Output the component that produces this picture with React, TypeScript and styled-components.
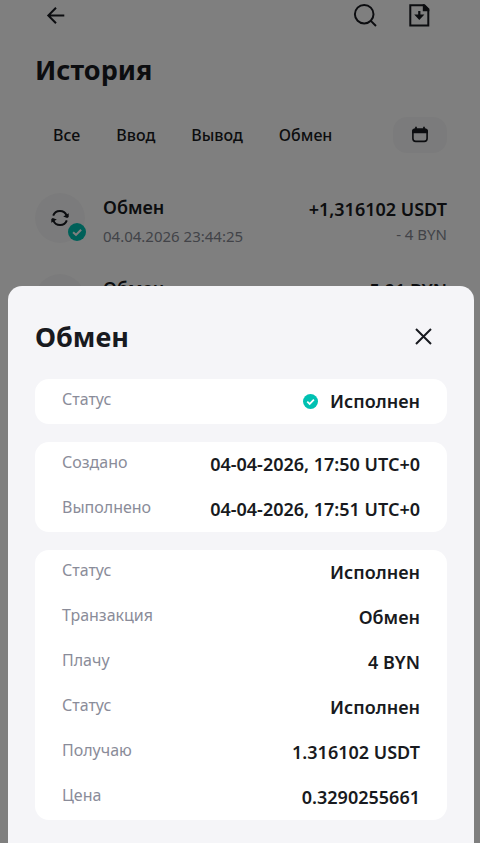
import React from "react";
import styled, { createGlobalStyle } from "styled-components";

const Global = createGlobalStyle`
  *, *::before, *::after { box-sizing: border-box; }
  html { height: 100%; }
  body {
    margin: 0;
    height: 100%;
    overflow: hidden;
    background: #fff;
    color: #181a20;
    font-family: "Noto Sans", sans-serif;
  }
  h1, h2, p, ul, dl, dd, dt { margin: 0; padding: 0; }
  button { border: 0; padding: 0; background: none; color: inherit; font: inherit; cursor: pointer; }
  svg { display: block; }
`;

const Page = styled.main`
  padding: 0 33px 0 35px;
`;

const TopBar = styled.header`
  display: flex;
  align-items: center;
  gap: 30px;
  height: 30px;
  padding: 0 16px 0 9px;
`;

const IconButton = styled.button`
  display: grid;
  place-items: center;
  width: 24px;
  height: 24px;
  flex: none;
`;

const Spacer = styled.span`
  flex: 1;
`;

const Title = styled.h1`
  margin-top: 21px;
  font-size: 27px;
  line-height: 38px;
  font-weight: 700;
`;

const Filters = styled.nav`
  display: flex;
  align-items: center;
  gap: 36px;
  margin-top: 28px;
  padding-left: 18px;
`;

const Filter = styled.button`
  font-size: 16px;
  line-height: 24px;
  font-weight: 500;
`;

const DateButton = styled.button`
  display: grid;
  place-items: center;
  width: 54px;
  height: 36px;
  border-radius: 14px;
  margin-left: auto;
  background: #f7f7f8;
`;

const List = styled.ul`
  list-style: none;
  margin-top: 31px;
`;

const Item = styled.li`
  display: flex;
  align-items: flex-start;
  height: 81px;
  padding-top: 9px;
`;

const Avatar = styled.span`
  position: relative;
  display: grid;
  place-items: center;
  flex: none;
  width: 50px;
  height: 50px;
  margin-right: 18px;
  border-radius: 50%;
  background: #f7f7f8;
`;

const Badge = styled.span`
  position: absolute;
  right: -1px;
  bottom: 2px;
`;

const ItemText = styled.div<{ $end?: boolean }>`
  flex: ${(p) => (p.$end ? "none" : "1")};
  padding-top: ${(p) => (p.$end ? "4px" : "2px")};
  text-align: ${(p) => (p.$end ? "right" : "left")};
`;

const ItemTitle = styled.p`
  font-size: 18px;
  line-height: 25px;
  font-weight: 600;
`;

const ItemNote = styled.p<{ $offset?: boolean }>`
  margin-top: ${(p) => (p.$offset ? "4px" : "0")};
  font-size: 15px;
  line-height: 24px;
  color: #848791;
`;

const Overlay = styled.div`
  position: fixed;
  inset: 0;
  display: flex;
  padding: 286px 6px 0 8px;
  background: rgba(0, 0, 0, 0.5);
`;

const Sheet = styled.section`
  flex: 1;
  display: flex;
  flex-direction: column;
  gap: 18px;
  padding: 32px 27px;
  border-radius: 14px 14px 0 0;
  background: #f5f5f8;
`;

const SheetHead = styled.header`
  display: flex;
  align-items: center;
  justify-content: space-between;
  height: 38px;
  margin-bottom: 5px;
  padding-right: 12px;
`;

const SheetTitle = styled.h2`
  font-size: 27px;
  line-height: 38px;
  font-weight: 700;
`;

const Card = styled.dl`
  border-radius: 14px;
  background: #fff;
`;

const Row = styled.div`
  display: flex;
  justify-content: space-between;
  height: 45px;
  padding: 0 27px;
`;

const Label = styled.dt`
  font-size: 16px;
  line-height: 40px;
  color: #8a8c99;
`;

const Value = styled.dd`
  display: flex;
  align-items: center;
  gap: 12px;
  font-size: 18px;
  line-height: 45px;
  font-weight: 600;
`;

const Check = ({ size }: { size: number }) => (
  <svg width={size} height={size} viewBox="0 0 18 18" aria-hidden="true">
    <circle cx="9" cy="9" r="9" fill="#00c1b2" />
    <path d="M5.1 9.2 8 11.9 13.1 6.8" fill="none" stroke="#fff" strokeWidth="2.1" />
  </svg>
);

const BackIcon = () => (
  <svg width="24" height="24" viewBox="0 0 24 24" fill="none" stroke="currentColor" strokeWidth="2">
    <path d="M20.3 12.5H4M12 4.7l-7.7 7.8 7.7 7.8" />
  </svg>
);

const SearchIcon = () => (
  <svg width="24" height="24" viewBox="0 0 24 24" fill="none" stroke="currentColor" strokeWidth="2">
    <circle cx="11.2" cy="11.2" r="9.3" />
    <path d="m17.6 17.6 5.4 5.4" />
  </svg>
);

const FileIcon = () => (
  <svg width="24" height="24" viewBox="0 0 24 24" fill="none" stroke="currentColor" strokeWidth="2">
    <path d="M3.3 2.2h13.2l4.8 4.8v15.5h-18z" />
    <path d="M15.8 1.2h2l4.5 4.5v2.5h-6.5z" fill="currentColor" stroke="none" />
    <path d="M11.2 8h2.2v3.6h4L12.3 17 7.2 11.6h4z" fill="currentColor" stroke="none" />
  </svg>
);

const CalendarIcon = () => (
  <svg width="18" height="18" viewBox="0 0 18 18" fill="none" stroke="currentColor">
    <rect x="1.9" y="3.2" width="14.2" height="12.2" rx="2.8" strokeWidth="1.6" />
    <path d="M1.1 7.2V5a2.5 2.5 0 0 1 2.5-2.5h10.8A2.5 2.5 0 0 1 16.9 5v2.2z" fill="currentColor" stroke="none" />
    <path d="M5 .8v3M13 .8v3" strokeWidth="1.7" />
  </svg>
);

const SwapIcon = () => (
  <svg width="20" height="20" viewBox="0 0 20 20" fill="none" stroke="currentColor" strokeWidth="2">
    <path d="M3.2 7.6A7.2 7.2 0 0 1 16.6 7.4M16.8 12.4A7.2 7.2 0 0 1 3.4 12.6" />
    <path d="M18.7 5.2v3.9l-1.5.8-4-1.5zM1.3 14.8v-3.9l1.5-.8 4 1.5z" fill="currentColor" stroke="none" />
  </svg>
);

const CloseIcon = () => (
  <svg width="24" height="24" viewBox="0 0 24 24" fill="none" stroke="currentColor" strokeWidth="2">
    <path d="M5 4 20 19M20 4 5 19" />
  </svg>
);

const filters = ["Все", "Ввод", "Вывод", "Обмен"];

const items = [
  { title: "Обмен", date: "04.04.2026 23:44:25", amount: "+1,316102 USDT", paid: "- 4 BYN" },
  { title: "Обмен", date: "", amount: "-5,91 BYN", paid: "" },
];

const cards: { label: string; value: string; done?: boolean }[][] = [
  [{ label: "Статус", value: "Исполнен", done: true }],
  [
    { label: "Создано", value: "04-04-2026, 17:50 UTC+0" },
    { label: "Выполнено", value: "04-04-2026, 17:51 UTC+0" },
  ],
  [
    { label: "Статус", value: "Исполнен" },
    { label: "Транзакция", value: "Обмен" },
    { label: "Плачу", value: "4 BYN" },
    { label: "Статус", value: "Исполнен" },
    { label: "Получаю", value: "1.316102 USDT" },
    { label: "Цена", value: "0.3290255661" },
  ],
];

export default function App() {
  return (
    <>
      <Global />
      <Page>
        <TopBar>
          <IconButton aria-label="Назад"><BackIcon /></IconButton>
          <Spacer />
          <IconButton aria-label="Поиск"><SearchIcon /></IconButton>
          <IconButton aria-label="Скачать"><FileIcon /></IconButton>
        </TopBar>
        <Title>История</Title>
        <Filters>
          {filters.map((name) => <Filter key={name}>{name}</Filter>)}
          <DateButton aria-label="Выбрать дату"><CalendarIcon /></DateButton>
        </Filters>
        <List>
          {items.map((item, i) => (
            <Item key={i}>
              <Avatar>
                <SwapIcon />
                <Badge><Check size={18} /></Badge>
              </Avatar>
              <ItemText>
                <ItemTitle>{item.title}</ItemTitle>
                <ItemNote $offset>{item.date}</ItemNote>
              </ItemText>
              <ItemText $end>
                <ItemTitle>{item.amount}</ItemTitle>
                <ItemNote>{item.paid}</ItemNote>
              </ItemText>
            </Item>
          ))}
        </List>
      </Page>
      <Overlay>
        <Sheet role="dialog" aria-modal="true" aria-labelledby="sheet-title">
          <SheetHead>
            <SheetTitle id="sheet-title">Обмен</SheetTitle>
            <IconButton aria-label="Закрыть"><CloseIcon /></IconButton>
          </SheetHead>
          {cards.map((rows, i) => (
            <Card key={i}>
              {rows.map((row, j) => (
                <Row key={j}>
                  <Label>{row.label}</Label>
                  <Value>
                    {row.done && <Check size={15} />}
                    {row.value}
                  </Value>
                </Row>
              ))}
            </Card>
          ))}
        </Sheet>
      </Overlay>
    </>
  );
}
